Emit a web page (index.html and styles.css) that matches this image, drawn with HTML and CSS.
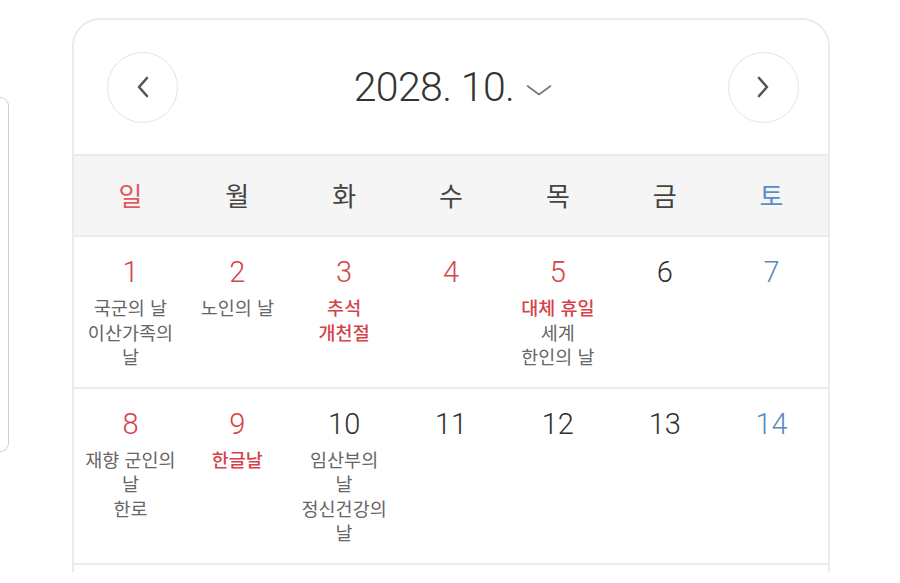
FILE: index.html
```html
<!DOCTYPE html>
<html lang="ko">
<head>
<meta charset="utf-8">
<title>2028. 10.</title>
<link rel="stylesheet" href="styles.css">
</head>
<body>
<div class="page">
  <div class="side-panel"></div>
  <section class="calendar">
    <header class="cal-head">
      <button class="nav-btn" aria-label="이전 달">
        <svg width="14" height="22" viewBox="0 0 14 22"><path d="M11 2 L3 11 L11 20" fill="none" stroke="#555" stroke-width="2.6" stroke-linecap="round" stroke-linejoin="round"/></svg>
      </button>
      <div class="title">
        <span class="title-text">2028. 10.</span>
        <svg class="caret" width="26" height="12" viewBox="0 0 26 12"><path d="M1.5 2 L13 10.5 L24.5 2" fill="none" stroke="#777" stroke-width="1.6" stroke-linecap="round" stroke-linejoin="round"/></svg>
      </div>
      <button class="nav-btn" aria-label="다음 달">
        <svg width="14" height="22" viewBox="0 0 14 22"><path d="M3 2 L11 11 L3 20" fill="none" stroke="#555" stroke-width="2.6" stroke-linecap="round" stroke-linejoin="round"/></svg>
      </button>
    </header>
    <div class="weekdays">
      <div class="wd sun">일</div>
      <div class="wd">월</div>
      <div class="wd">화</div>
      <div class="wd">수</div>
      <div class="wd">목</div>
      <div class="wd">금</div>
      <div class="wd sat">토</div>
    </div>
    <div class="week">
      <div class="day red"><span class="num">1</span><span class="ev">국군의 날</span><span class="ev">이산가족의<br>날</span></div>
      <div class="day red"><span class="num">2</span><span class="ev">노인의 날</span></div>
      <div class="day red"><span class="num">3</span><span class="ev hol">추석</span><span class="ev hol">개천절</span></div>
      <div class="day red"><span class="num">4</span></div>
      <div class="day red"><span class="num">5</span><span class="ev hol">대체 휴일</span><span class="ev">세계<br>한인의 날</span></div>
      <div class="day"><span class="num">6</span></div>
      <div class="day blue"><span class="num">7</span></div>
    </div>
    <div class="week">
      <div class="day red"><span class="num">8</span><span class="ev">재향 군인의<br>날</span><span class="ev">한로</span></div>
      <div class="day red"><span class="num">9</span><span class="ev hol">한글날</span></div>
      <div class="day"><span class="num">10</span><span class="ev">임산부의<br>날</span><span class="ev">정신건강의<br>날</span></div>
      <div class="day"><span class="num">11</span></div>
      <div class="day"><span class="num">12</span></div>
      <div class="day"><span class="num">13</span></div>
      <div class="day blue"><span class="num">14</span></div>
    </div>
    <div class="week week-next"></div>
  </section>
</div>
</body>
</html>
```

FILE: styles.css
```css
* { box-sizing: border-box; }
html, body { margin: 0; padding: 0; background: #fff; }
body {
  font-family: Roboto, "Noto Sans CJK KR", sans-serif;
  color: #333;
}
.page {
  width: 900px;
  height: 572px;
  overflow: hidden;
  display: flex;
  align-items: flex-start;
}
.side-panel {
  flex: none;
  width: 9px;
  height: 355px;
  margin-top: 97px;
  border: 1.5px solid #cfcfcf;
  border-left: none;
  border-radius: 0 9px 9px 0;
}
.calendar {
  flex: none;
  width: 758px;
  margin-top: 18px;
  margin-left: 63px;
  border: 2px solid #ebebeb;
  border-radius: 28px 28px 0 0;
  background: #fff;
}
.cal-head {
  height: 136px;
  display: flex;
  align-items: center;
  justify-content: space-between;
  padding: 0 29px 0 33px;
  border-bottom: 2px solid #ebebeb;
}
.nav-btn {
  width: 71px;
  height: 71px;
  border-radius: 50%;
  border: 1.5px solid #e4e4e4;
  background: #fff;
  display: flex;
  align-items: center;
  justify-content: center;
  padding: 0;
}
.title {
  display: flex;
  align-items: center;
  gap: 12px;
  margin-left: 0;
}
.title-text {
  font-family: Roboto, sans-serif;
  font-weight: 300;
  font-size: 41px;
  letter-spacing: -0.6px;
  color: #333;
  line-height: 1;
}
.caret { margin-top: 6px; }
.weekdays {
  display: grid;
  grid-template-columns: repeat(7, 1fr);
  height: 81px;
  align-items: center;
  background: #f5f5f5;
  padding: 0 3px;
  border-bottom: 2px solid #ebebeb;
}
.wd {
  text-align: center;
  font-family: "Noto Sans CJK KR", sans-serif;
  font-size: 26px;
  color: #444;
  padding-bottom: 2px;
}
.wd.sun { color: #de5a60; }
.wd.sat { color: #5d8bc7; }
.week {
  display: grid;
  grid-template-columns: repeat(7, 1fr);
  padding: 0 3px;
  border-bottom: 2px solid #ebebeb;
}
.week-next {
  height: 40px;
  border-bottom: none;
}
.day {
  display: flex;
  flex-direction: column;
  align-items: center;
  text-align: center;
  padding: 17px 4px 18px;
  color: #333;
}
.num {
  font-family: Roboto, sans-serif;
  font-weight: 300;
  font-size: 29px;
  line-height: 36px;
  margin-bottom: 5px;
  color: #2f2f2f;
}
.red .num { color: #d4434a; }
.blue .num { color: #5a88c3; }
.ev {
  font-family: "Noto Sans CJK KR", sans-serif;
  font-size: 18.5px;
  line-height: 24.5px;
  color: #666;
  white-space: nowrap;
}
.ev.hol { color: #d4434a; font-weight: 500; }
```
